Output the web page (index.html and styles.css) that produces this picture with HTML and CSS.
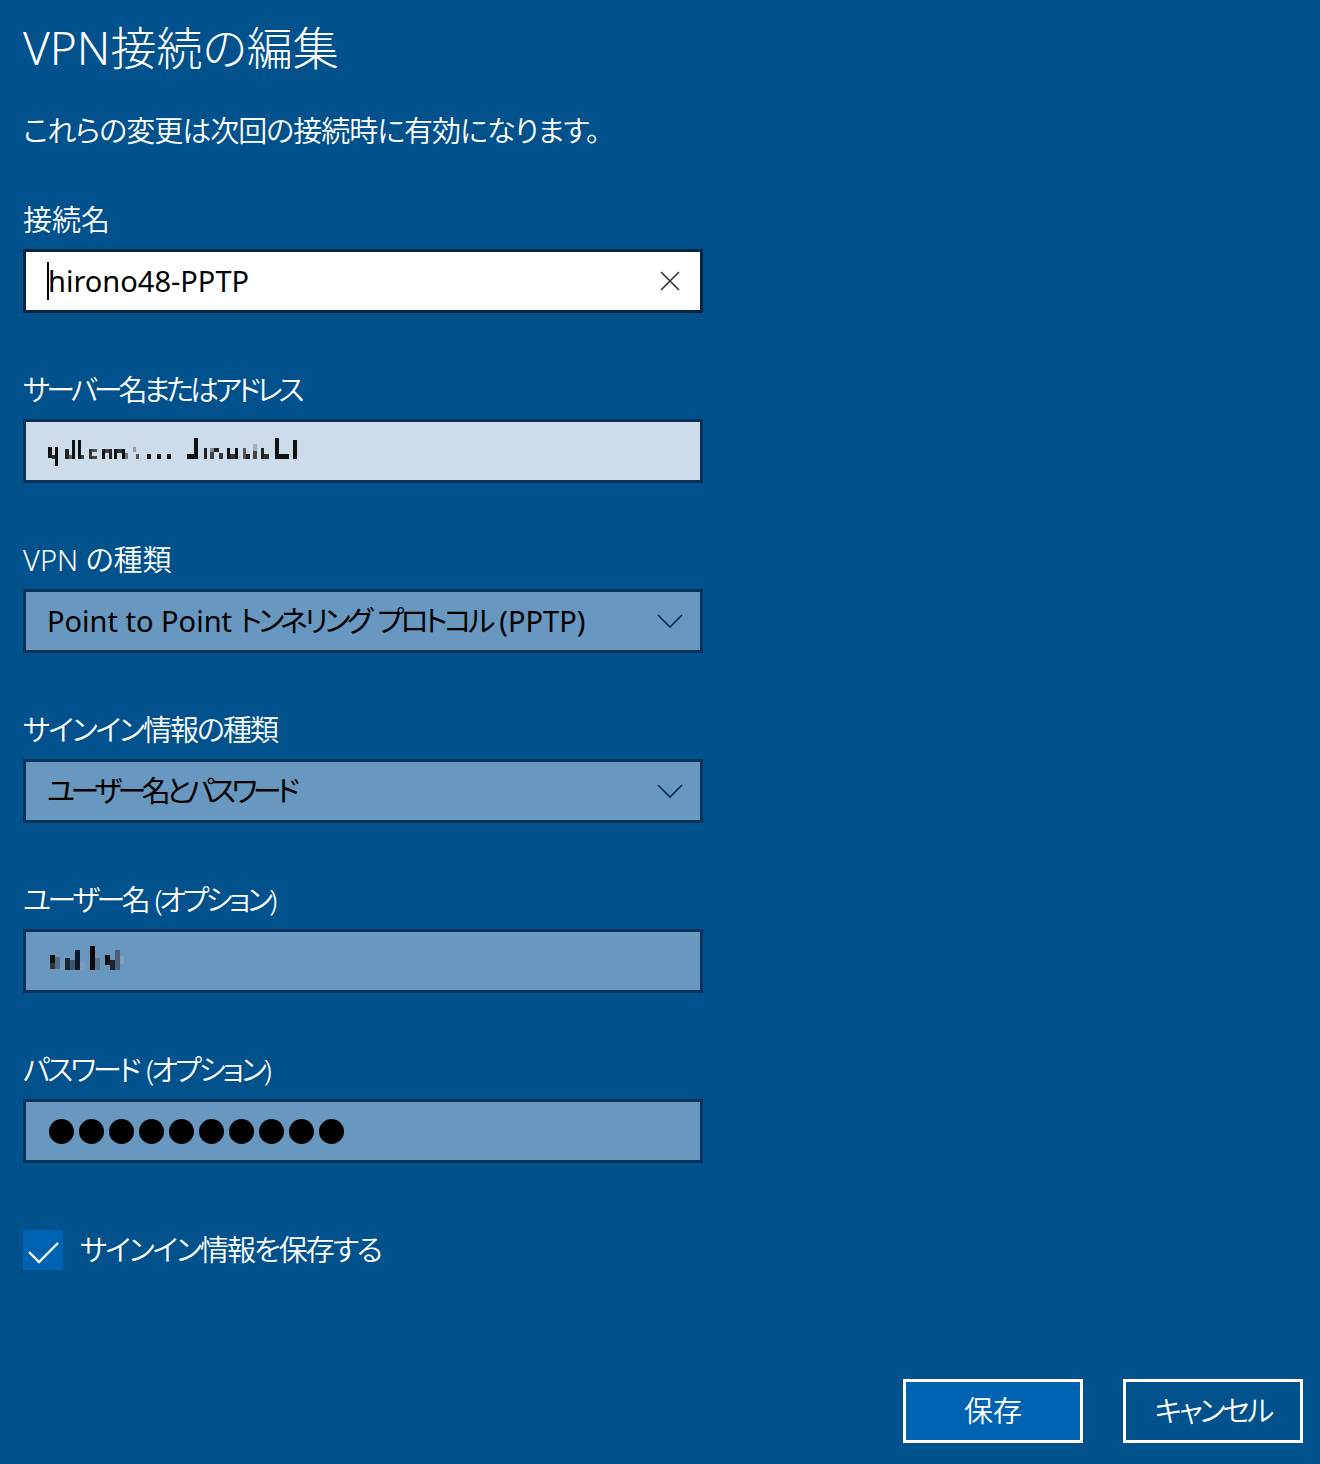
FILE: index.html
```html
<!DOCTYPE html>
<html lang="ja">
<head>
<meta charset="utf-8">
<title>VPN接続の編集</title>
<link rel="stylesheet" href="styles.css">
</head>
<body>
<main class="page">
  <h1 class="title">VPN接続の編集</h1>
  <p class="subtitle">これらの変更は次回の接続時に有効になります。</p>

  <div class="form">
    <div class="group">
      <div class="label">接続名</div>
      <div class="field field-focus">
        <span class="caret"></span><span class="value">hirono48-PPTP</span>
        <svg class="icon" width="26" height="26" viewBox="0 0 26 26" aria-hidden="true">
          <path d="M4 4 L22 22 M22 4 L4 22" stroke="#333" stroke-width="1.6" fill="none"/>
        </svg>
      </div>
    </div>

    <div class="group">
      <div class="label tight-4">サーバー名またはアドレス</div>
      <div class="field field-disabled">
        <svg class="mosaic" width="252" height="32" viewBox="0 0 252 32" aria-label="サーバー名">
          <rect x="1" y="12" width="4" height="11" fill="#111"/>
          <rect x="5" y="20" width="3" height="4" fill="#333"/>
          <rect x="8" y="12" width="3" height="19" fill="#111"/>
          <rect x="18" y="14" width="4" height="10" fill="#222"/>
          <rect x="22" y="20" width="3" height="4" fill="#666"/>
          <rect x="25" y="5" width="3" height="19" fill="#111"/>
          <rect x="31" y="5" width="3" height="19" fill="#111"/>
          <rect x="34" y="20" width="3" height="4" fill="#444"/>
          <rect x="42" y="14" width="3" height="10" fill="#333"/>
          <rect x="45" y="14" width="5" height="3" fill="#555"/>
          <rect x="45" y="21" width="5" height="3" fill="#444"/>
          <rect x="55" y="14" width="3" height="10" fill="#111"/>
          <rect x="58" y="14" width="4" height="4" fill="#444"/>
          <rect x="62" y="14" width="3" height="10" fill="#222"/>
          <rect x="67" y="14" width="3" height="10" fill="#111"/>
          <rect x="70" y="14" width="5" height="4" fill="#333"/>
          <rect x="75" y="14" width="3" height="10" fill="#111"/>
          <rect x="78" y="18" width="3" height="6" fill="#777"/>
          <rect x="86" y="12" width="3" height="5" fill="#999"/>
          <rect x="89" y="19" width="3" height="5" fill="#555"/>
          <rect x="100" y="19" width="4" height="5" fill="#111"/>
          <rect x="110" y="19" width="4" height="5" fill="#111"/>
          <rect x="120" y="19" width="4" height="5" fill="#111"/>
          <rect x="140" y="19" width="7" height="5" fill="#111"/>
          <rect x="147" y="3" width="4" height="21" fill="#111"/>
          <rect x="157" y="13" width="3" height="11" fill="#222"/>
          <rect x="163" y="13" width="4" height="4" fill="#888"/>
          <rect x="163" y="17" width="4" height="7" fill="#444"/>
          <rect x="167" y="13" width="5" height="4" fill="#222"/>
          <rect x="172" y="18" width="4" height="6" fill="#333"/>
          <rect x="180" y="13" width="3" height="11" fill="#111"/>
          <rect x="183" y="19" width="5" height="5" fill="#333"/>
          <rect x="188" y="13" width="3" height="11" fill="#111"/>
          <rect x="196" y="13" width="3" height="11" fill="#555"/>
          <rect x="199" y="19" width="4" height="5" fill="#222"/>
          <rect x="206" y="9" width="4" height="7" fill="#aaa"/>
          <rect x="206" y="16" width="4" height="8" fill="#444"/>
          <rect x="214" y="13" width="3" height="11" fill="#222"/>
          <rect x="217" y="19" width="5" height="5" fill="#333"/>
          <rect x="228" y="3" width="4" height="21" fill="#111"/>
          <rect x="232" y="19" width="10" height="5" fill="#111"/>
          <rect x="246" y="5" width="4" height="19" fill="#111"/>
        </svg>
      </div>
    </div>

    <div class="group">
      <div class="label">VPN の種類</div>
      <div class="field field-select">
        <span class="value">Point to Point <span class="tight-35">トンネリング プロトコル</span> (PPTP)</span>
        <svg class="icon" width="26" height="26" viewBox="0 0 26 26" aria-hidden="true">
          <path d="M1 7 L13 19 L25 7" stroke="#0d2a48" stroke-width="1.6" fill="none"/>
        </svg>
      </div>
    </div>

    <div class="group">
      <div class="label tight-2">サインイン情報の種類</div>
      <div class="field field-select">
        <span class="value tight-45">ユーザー名とパスワード</span>
        <svg class="icon" width="26" height="26" viewBox="0 0 26 26" aria-hidden="true">
          <path d="M1 7 L13 19 L25 7" stroke="#0d2a48" stroke-width="1.6" fill="none"/>
        </svg>
      </div>
    </div>

    <div class="group">
      <div class="label tight-35">ユーザー名 (オプション)</div>
      <div class="field field-select">
        <svg class="mosaic" width="80" height="30" viewBox="0 0 80 30" aria-label="ユーザー名">
          <rect x="3" y="9" width="5" height="8" fill="#111"/>
          <rect x="3" y="17" width="5" height="6" fill="#333"/>
          <rect x="8" y="11" width="5" height="12" fill="#4f6f8d"/>
          <rect x="13" y="14" width="5" height="9" fill="#7a9cbc"/>
          <rect x="18" y="12" width="5" height="12" fill="#1a2633"/>
          <rect x="23" y="14" width="5" height="10" fill="#3e5670"/>
          <rect x="28" y="4" width="5" height="20" fill="#0f1a26"/>
          <rect x="33" y="16" width="5" height="8" fill="#7b9bb8"/>
          <rect x="43" y="0" width="5" height="24" fill="#0a0a0a"/>
          <rect x="48" y="12" width="5" height="12" fill="#5a7590"/>
          <rect x="58" y="9" width="5" height="10" fill="#111"/>
          <rect x="63" y="14" width="5" height="10" fill="#1a2633"/>
          <rect x="68" y="4" width="5" height="20" fill="#4a5f75"/>
          <rect x="73" y="10" width="4" height="8" fill="#7f9fbd"/>
        </svg>
      </div>
    </div>

    <div class="group">
      <div class="label tight-3">パスワード (オプション)</div>
      <div class="field field-select">
        <span class="dots">
          <span class="dot"></span><span class="dot"></span><span class="dot"></span><span class="dot"></span><span class="dot"></span><span class="dot"></span><span class="dot"></span><span class="dot"></span><span class="dot"></span><span class="dot"></span>
        </span>
      </div>
    </div>
  </div>

  <label class="check-row">
    <span class="checkbox">
      <svg width="40" height="40" viewBox="0 0 40 40" aria-hidden="true">
        <path d="M6 22 L16 32 L35 13" stroke="#fff" stroke-width="2.4" fill="none"/>
      </svg>
    </span>
    <span class="check-text tight-2">サインイン情報を保存する</span>
  </label>

  <div class="actions">
    <button class="btn btn-primary" type="button">保存</button>
    <button class="btn btn-secondary tight-3" type="button">キャンセル</button>
  </div>
</main>
</body>
</html>
```

FILE: styles.css
```css
html, body {
  margin: 0;
  padding: 0;
  background: #01518c;
}

body {
  width: 1320px;
  min-height: 1464px;
  color: #ffffff;
  font-family: "Noto Sans", "Noto Sans CJK JP", sans-serif;
  font-feature-settings: "palt";
  font-weight: 350;
}

.page {
  display: flex;
  flex-direction: column;
  padding: 17px 17px 0 23px;
}

.title {
  margin: 0;
  font-size: 46px;
  line-height: 60px;
  font-weight: 300;
}

.subtitle {
  margin: 34px 0 0;
  font-size: 29px;
  line-height: 40px;
  letter-spacing: -1px;
}

.form {
  display: flex;
  flex-direction: column;
  gap: 57px;
  margin-top: 49px;
  width: 680px;
}

.group {
  display: flex;
  flex-direction: column;
}

.label {
  font-size: 29px;
  line-height: 40px;
  height: 40px;
  white-space: nowrap;
}

.tight-2 {
  letter-spacing: -2px;
  word-spacing: 2px;
}

.tight-3 {
  letter-spacing: -3px;
  word-spacing: 3px;
}

.tight-35 {
  letter-spacing: -3.5px;
  word-spacing: 3.5px;
}

.tight-4 {
  letter-spacing: -4px;
  word-spacing: 4px;
}

.tight-45 {
  letter-spacing: -4.5px;
  word-spacing: 4.5px;
}

.field {
  margin-top: 9px;
  height: 64px;
  box-sizing: border-box;
  border: 3px solid #0c3259;
  display: flex;
  align-items: center;
  padding: 0 17px 0 21px;
  font-size: 29px;
  line-height: 40px;
  font-weight: 400;
  color: #000;
}

.field-focus {
  background: #ffffff;
  border-color: #0a2542;
}

.field-disabled {
  background: #cddcea;
}

.field-select {
  background: #6897bf;
}

.caret {
  display: inline-block;
  width: 0;
  height: 38px;
  border-left: 2px solid #000;
  margin-right: -1px;
}

.value {
  white-space: nowrap;
}

.icon {
  margin-left: auto;
  flex: none;
}

.mosaic {
  flex: none;
  display: block;
}

.dots {
  display: flex;
  gap: 5px;
  padding-left: 2px;
}

.dot {
  width: 25px;
  height: 25px;
  border-radius: 50%;
  background: #000;
}

.check-row {
  display: flex;
  align-items: center;
  gap: 17px;
  margin-top: 67px;
  height: 40px;
}

.checkbox {
  width: 40px;
  height: 40px;
  background: #0063b1;
  display: block;
}

.checkbox svg {
  display: block;
}

.check-text {
  font-size: 29px;
  line-height: 40px;
}

.actions {
  display: flex;
  justify-content: flex-end;
  gap: 40px;
  margin-top: 109px;
}

.btn {
  width: 180px;
  height: 64px;
  box-sizing: border-box;
  border: 3px solid #ffffff;
  color: #ffffff;
  font-family: inherit;
  font-feature-settings: "palt";
  font-weight: 350;
  font-size: 29px;
  line-height: 40px;
  display: flex;
  align-items: center;
  justify-content: center;
  padding: 0;
  margin: 0;
}

.btn-primary {
  background: #0063b1;
}

.btn-secondary {
  background: transparent;
}
```
